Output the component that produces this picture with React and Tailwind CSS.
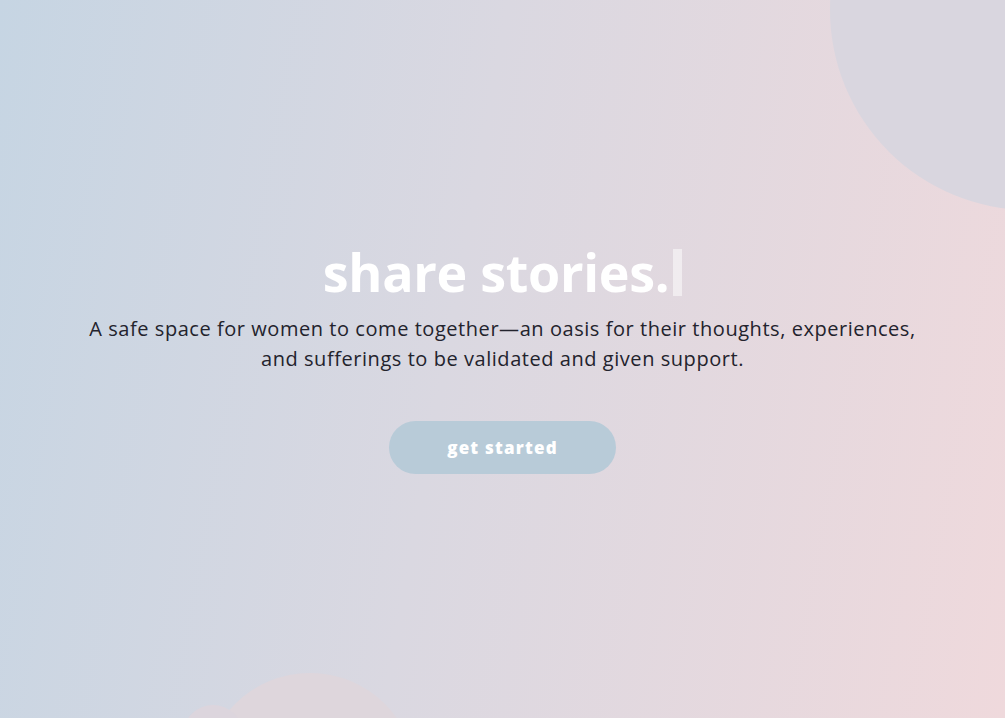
export default function App() {
  return (
    <div className="relative h-screen w-full overflow-hidden bg-[linear-gradient(100deg,#c6d5e3_0%,#dad8e1_45%,#efd9dc_100%)] font-['Open_Sans',sans-serif]">
      <div className="absolute left-[830px] top-[-190px] h-[400px] w-[400px] rounded-full bg-[#d9d6df]" />
      <div className="absolute left-[204px] top-[673px] h-[212px] w-[212px] rounded-full bg-[#ded6dc]" />
      <div className="absolute left-[183px] top-[705px] h-[60px] w-[60px] rounded-full bg-[#dcd5dd]" />

      <div className="relative flex h-full flex-col items-center justify-center">
        <h1 className="flex items-center text-[52px] font-bold leading-[56px] tracking-[-0.3px] text-white">
          share stories.
          <span className="ml-[4px] inline-block h-[47px] w-[9px] bg-white/50" />
        </h1>
        <p className="mt-[14px] w-[850px] text-center text-[20px] leading-[30px] tracking-[0.55px] text-[#23232d]">
          A safe space for women to come together—an oasis for their thoughts, experiences, and sufferings to be validated and given support.
        </p>
        <button className="mt-[47px] h-[53px] w-[227px] rounded-full bg-[#b8cbd8] text-[17px] font-extrabold tracking-[1.2px] text-white">
          get started
        </button>
      </div>
    </div>
  );
}
